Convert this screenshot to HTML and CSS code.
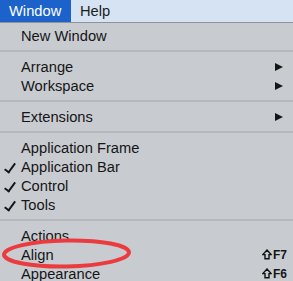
FILE: index.html
```html
<!DOCTYPE html>
<html lang="en">
  <head>
    <meta charset="UTF-8" />
    <title>Window menu</title>
    <link rel="stylesheet" href="styles.css">
  </head>
  <body>
    <div class="menubar">
      <span class="menubar-item active">Window</span>
      <span class="menubar-item">Help</span>
    </div>

    <div class="menu">
      <div class="menu-item">New Window</div>
      <div class="separator"></div>
      <div class="menu-item">Arrange <span class="submenu-arrow"></span></div>
      <div class="menu-item">Workspace <span class="submenu-arrow"></span></div>
      <div class="separator"></div>
      <div class="menu-item">Extensions <span class="submenu-arrow"></span></div>
      <div class="separator"></div>
      <div class="menu-item">Application Frame</div>
      <div class="menu-item checked">Application Bar</div>
      <div class="menu-item checked">Control</div>
      <div class="menu-item checked">Tools</div>
      <div class="separator"></div>
      <div class="menu-item">Actions</div>
      <div class="menu-item">Align
        <span class="shortcut">
          <svg class="shift" width="10" height="11" viewBox="0 0 10 11"><path d="M5 1 L9.2 5.6 H7 V9.8 H3 V5.6 H0.8 Z" fill="none" stroke="#111" stroke-width="1.4" stroke-linejoin="miter"/></svg>F7
        </span>
      </div>
      <div class="menu-item">Appearance
        <span class="shortcut">
          <svg class="shift" width="10" height="11" viewBox="0 0 10 11"><path d="M5 1 L9.2 5.6 H7 V9.8 H3 V5.6 H0.8 Z" fill="none" stroke="#111" stroke-width="1.4" stroke-linejoin="miter"/></svg>F6
        </span>
      </div>

      <!-- red circle drawn over the screenshot -->
      <svg class="highlight-ring" width="134" height="36" viewBox="0 0 134 36">
        <ellipse cx="66.5" cy="18.5" rx="62.5" ry="13" fill="none" stroke="#ec3b3f" stroke-width="4" transform="rotate(-1 66.5 18.5)"/>
      </svg>
    </div>
  </body>
</html>
```

FILE: styles.css
```css
body {
  margin: 0;
  font-family: "Liberation Sans", Arial, sans-serif;
  font-size: 14.7px;
  color: #161616;
  background: #c8ccd1;
  height: 281px;
  overflow: hidden;
}
.menubar {
  display: flex;
  height: 22px;
  background: #d5e3f3;
  border-bottom: 1px solid #8f9398;
}
.menubar-item {
  display: flex;
  align-items: center;
  padding: 0 10px 0 9px;
  color: #1c1c1c;
}
.menubar-item.active {
  width: 52px;
  background: #1b63cb;
  color: #fff;
}
.menu {
  position: relative;
  padding-top: 3px;
  background: #c8ccd1;
}
.menu-item {
  display: flex;
  align-items: center;
  height: 19px;
  padding: 0 10px 0 21px;
  position: relative;
}
.menu-item.checked::before {
  content: "";
  position: absolute;
  left: 7px;
  top: 4px;
  width: 4px;
  height: 10px;
  border-right: 2px solid #161616;
  border-bottom: 2px solid #161616;
  transform: rotate(36deg);
}
.submenu-arrow {
  margin-left: auto;
  width: 0;
  height: 0;
  border-left: 8px solid #161616;
  border-top: 4.5px solid transparent;
  border-bottom: 4.5px solid transparent;
}
.shortcut {
  margin-left: auto;
  margin-right: -4px;
  display: flex;
  align-items: center;
  gap: 1px;
  font-size: 12px;
  font-weight: bold;
}
.separator {
  height: 2px;
  margin: 5px 0;
  background: #b5b9be;
}
.highlight-ring {
  position: absolute;
  left: 0;
  top: 212px;
}
```
